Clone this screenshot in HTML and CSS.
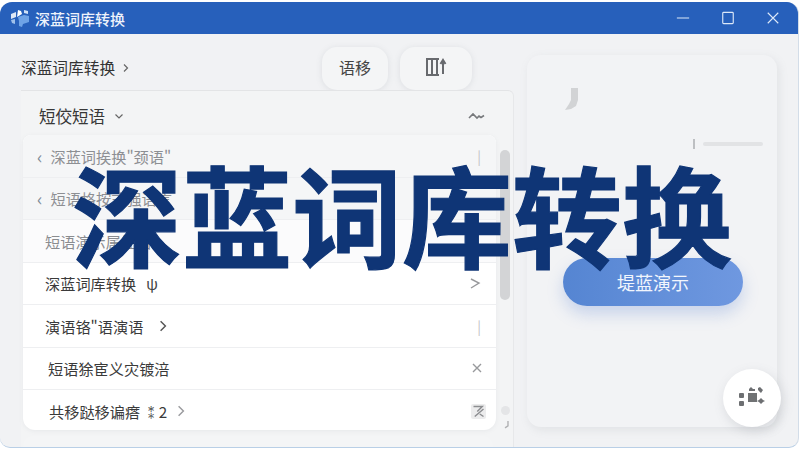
FILE: index.html
```html
<!DOCTYPE html>
<html lang="zh">
<head>
<meta charset="utf-8">
<title>深蓝词库转换</title>
<link rel="stylesheet" href="styles.css">
</head>
<body>
<div class="window">
  <header class="titlebar">
    <svg class="logo" viewBox="0 0 20 20"><path fill="#dfe8f5" d="M1 6l5-2v5l-5 2z"/><path fill="#9fc0ea" d="M1 12l4-1v5l-3-1z"/><path fill="#fff" d="M8 2l3 1 1 3-5 3z"/><path fill="#6fa3e6" d="M8 9l6-2 5 1v6l-6 2-1 3-3-1v-5z"/><path fill="#cfe0f6" d="M14 2l4 1v3l-4-1z"/></svg>
    <span class="app-name">深蓝词库转换</span>
    <div class="win-controls">
      <svg viewBox="0 0 16 16" class="win-btn"><path d="M1 8h14" /></svg>
      <svg viewBox="0 0 16 16" class="win-btn"><rect x="2" y="1.500" width="12" height="13" rx="1"/></svg>
      <svg viewBox="0 0 16 16" class="win-btn"><path d="M2 2l12 12M14 2L2 14"/></svg>
    </div>
  </header>
  <main class="content">
    <section class="left">
      <div class="crumb-row">
        <div class="crumb">深蓝词库转换<svg class="chev" viewBox="0 0 10 10"><path d="M3 1.500l3.500 3.500L3 8.500"/></svg></div>
        <div class="tools">
          <div class="tool tool-a">语移</div>
          <div class="tool tool-b">
            <svg viewBox="0 0 24 20" class="tool-icon"><path d="M2 2h13M2 18h13M3 2v16M8 3v14M13 3v14M19 17V4M16.500 7L19 3l2.500 4"/></svg>
          </div>
        </div>
      </div>
      <div class="panel">
        <div class="panel-head">
          <div class="panel-title">短佼短语<svg class="chev down" viewBox="0 0 10 10"><path d="M1.500 3.500L5 7l3.500-3.500"/></svg></div>
          <svg class="wave" viewBox="0 0 18 8"><path d="M1 6l4-4 4 4 2-2 2 1.500 3-2"/></svg>
        </div>
        <div class="panel-body">
          <div class="list">
            <div class="row row-dim row-1"><span class="lead">‹</span><span>深蓝词挨换"颈语"</span><i class="mark">|</i></div>
            <div class="row row-dim row-2"><span class="lead">‹</span><span>短语格按式强语言</span></div>
            <div class="row row-soft row-3"><span>短语演示属性语</span></div>
            <div class="row row-4"><span>深蓝词库转换</span><span class="extra">ψ</span><svg class="mark-x" viewBox="0 0 12 12"><path d="M2 2l8 4-8 5"/></svg></div>
            <div class="row row-5"><span>演语铬"语演语</span><svg class="chev inline" viewBox="0 0 10 10"><path d="M3 1l4 4-4 4"/></svg><i class="mark">|</i></div>
            <div class="row row-6"><span>短语狳宦义灾镀涪</span><svg class="mark-x" viewBox="0 0 12 12"><path d="M2 2l8 8M10 2l-8 8"/></svg></div>
            <div class="row row-7"><span>共移跶移谝瘩 ⁑2</span><svg class="chev inline light" viewBox="0 0 10 10"><path d="M3 1l4 4-4 4"/></svg><span class="mark-box"><svg viewBox="0 0 12 12"><path d="M2 2h7L5 6M3 10l7-6M7 8l3 2"/></svg></span></div>
          </div>
          <div class="scroll">
            <div class="thumb"></div>
            <div class="dot"></div>
            <svg class="hook small" viewBox="0 0 8 10"><path d="M5 1v5L2 8"/></svg>
          </div>
        </div>
        <div class="next-card"></div>
      </div>
    </section>
    <aside class="right">
      <div class="card">
        <svg class="hook big" viewBox="0 0 16 24"><path d="M8 1h7v12l-2 6-5 3-6 1 4-6 2-4z"/></svg>
        <div class="dash"><span class="dash-tick"></span><span class="dash-line"></span></div>
        <div class="primary">堤蓝演示</div>
      </div>
    </aside>
  </main>
  <button class="fab" aria-label="更多">
    <svg viewBox="0 0 28 24"><rect x="10" y="7" width="9" height="9" fill="#707274"/><rect x="1" y="7" width="5" height="5" rx="1"/><rect x="1" y="15" width="5" height="5" rx="1"/><path d="M11 3l2-2 2 2h2v2h-6zM20 2l2-1 3 3-2 3-3-3zM21 14l2-2 2 2 2 1-2 1-2 2-2-2-2-1z"/></svg>
  </button>
  <h1 class="overlay">深蓝词库转换</h1>
</div>
</body>
</html>
```
FILE: styles.css
```css
* { box-sizing: border-box; }
html, body { margin: 0; padding: 0; width: 800px; height: 450px; overflow: hidden; background: #fff; }
body { font-family: "Noto Sans CJK SC", "Noto Sans", sans-serif; color: #333; }

.window {
  position: relative;
  width: 799px;
  height: 446px;
  margin-top: 2px;
  display: flex;
  flex-direction: column;
  background: #f1f2f4;
  border-radius: 12px 12px 10px 10px;
  border-bottom: 1px solid #b9cfe6;
  border-right: 1px solid #d3dde8;
  overflow: hidden;
}

.titlebar {
  flex: none;
  height: 32px;
  display: flex;
  align-items: center;
  padding-left: 10px;
  background: #2760bb;
  color: #eef3fb;
}
.logo { width: 20px; height: 20px; margin-right: 5px; }
.app-name { font-size: 15px; font-weight: 500; }
.win-controls { margin-left: auto; display: flex; align-items: center; gap: 31px; padding-right: 18px; }
.win-btn { width: 14px; height: 14px; fill: none; stroke: #dce8f8; stroke-width: 1.3; }

.content { flex: 1; min-height: 0; display: flex; }

.left { width: 516px; flex: none; padding-left: 21px; display: flex; flex-direction: column; }

.crumb-row { height: 56px; flex: none; display: flex; }
.crumb { font-size: 15.7px; line-height: 20px; margin-top: 24px; height: 20px; color: #333; display: flex; align-items: center; gap: 6px; }
.chev { width: 10px; height: 10px; fill: none; stroke: #666; stroke-width: 1.2; }
.tools { margin-left: auto; margin-right: 44px; margin-top: 13px; display: flex; gap: 12px; align-items: flex-start; }
.tool {
  height: 43px;
  border-radius: 15px;
  background: #f4f5f6;
  box-shadow: 0 1px 6px rgba(120,125,135,.16);
  display: flex;
  align-items: center;
  justify-content: center;
  font-size: 16px;
  color: #444;
  padding-bottom: 3px;
}
.tool-a { width: 66px; }
.tool-b { width: 72px; }
.tool-icon { width: 24px; height: 20px; fill: none; stroke: #686a6e; stroke-width: 2; }

.panel {
  flex: 1;
  min-height: 0;
  position: relative;
  margin-right: 2px;
  border-top: 1px solid #e3e4e6;
  border-right: 1px solid #e7e8ea;
  border-radius: 0 6px 0 0;
  background: #f3f4f5;
  display: flex;
  flex-direction: column;
}
.panel-head { flex: none; height: 44px; display: flex; align-items: center; padding: 6px 27px 0 18px; justify-content: space-between; }
.panel-title { font-size: 16.5px; display: flex; align-items: center; gap: 9px; color: #383838; }
.wave { width: 18px; height: 8px; fill: none; stroke: #77797c; stroke-width: 1.6; }

.panel-body { flex: 1; min-height: 0; display: flex; align-items: flex-start; padding-left: 2px; }

.list {
  width: 473px;
  height: 295px;
  flex: none;
  border-radius: 8px 8px 12px 12px;
  background: #fff;
  overflow: hidden;
  box-shadow: 0 1px 4px rgba(130,135,145,.10);
}
.row {
  height: 42.5px;
  display: flex;
  align-items: center;
  padding: 0 15px 0 22px;
  font-size: 15.2px;
  color: #3a3a3a;
  border-bottom: 1px solid #eeeff1;
}
.row:last-child { border-bottom: 0; }
.row-dim { background: #f5f6f7; color: #8d8f93; padding-left: 14px; }
.row-soft { background: #fbfbfc; color: #8a8c90; }
.lead { font-size: 18px; line-height: 20px; margin-right: 8px; color: #7f8b99; }
.row-5 .chev.inline { margin-left: 14px; }
.row-6 { padding-left: 25px; padding-right: 13px; }
.row-7 { padding-left: 26px; padding-right: 10px; }
.extra { margin-left: 10px; color: #444; }
.chev.inline { width: 12px; height: 12px; margin-left: 8px; stroke: #555; }
.chev.light { stroke: #9a9b9e; }
.mark { margin-left: auto; font-style: normal; color: #c2c3c6; font-size: 14px; }
.mark-x { margin-left: auto; width: 12px; height: 12px; fill: none; stroke: #98999c; stroke-width: 1.4; }
.mark-box { margin-left: auto; width: 15px; height: 15px; background: #ececed; border-radius: 2px; display: flex; }
.mark-box svg { fill: none; stroke: #8d8e91; stroke-width: 1.2; }

.scroll { flex: 1; height: 295px; padding-left: 4px; padding-top: 15px; display: flex; flex-direction: column; }
.thumb { width: 10px; height: 152px; border-radius: 5px; background: #d3d4d6; }
.dot { width: 9px; height: 9px; border-radius: 50%; background: #e4e5e7; margin-top: 106px; margin-left: 1px; }
.hook { fill: none; stroke: #b0b1b3; }
.hook.small { width: 8px; height: 10px; margin-top: 5px; margin-left: 3px; stroke-width: 1.4; }

.next-card { position: absolute; left: 2px; top: 345px; width: 470px; height: 40px; background: #f4f5f6; border-radius: 10px; }

.right { flex: 1; padding-top: 21px; padding-left: 11px; }
.card {
  width: 250px;
  height: 372px;
  border-radius: 14px;
  background: #f2f3f5;
  box-shadow: 2px 3px 10px rgba(130,135,145,.14);
  display: flex;
  flex-direction: column;
}
.hook.big { width: 16px; height: 24px; margin: 32px 0 0 36px; fill: #d2d3d5; stroke: none; }
.dash { margin: 28px 0 0 166px; display: flex; align-items: center; gap: 8px; height: 10px; }
.dash-tick { width: 2px; height: 10px; background: #bdbfc2; }
.dash-line { width: 60px; height: 4px; background: #e2e3e5; border-radius: 2px; }
.primary {
  width: 180px;
  height: 48px;
  margin: 109px 0 0 36px;
  border-radius: 24px;
  background: linear-gradient(90deg, #5585d2, #6f98e0);
  box-shadow: 0 8px 16px rgba(90,130,210,.28);
  color: #f2f6fd;
  font-size: 18px;
  display: flex;
  align-items: center;
  justify-content: center;
}

.fab {
  position: absolute;
  left: 723px;
  top: 367px;
  width: 58px;
  height: 58px;
  padding: 0;
  border: 0;
  border-radius: 50%;
  background: #fff;
  box-shadow: 2px 4px 12px rgba(110,115,125,.2);
  display: flex;
  align-items: center;
  justify-content: center;
}
.fab svg { width: 28px; height: 24px; fill: #6d6f72; }

.overlay {
  position: absolute;
  left: 72px;
  top: 145px;
  margin: 0;
  font-size: 110px;
  line-height: 130px;
  font-weight: 700;
  -webkit-text-stroke: 1.2px #0f3576;
  color: #0f3576;
  white-space: nowrap;
}
```
